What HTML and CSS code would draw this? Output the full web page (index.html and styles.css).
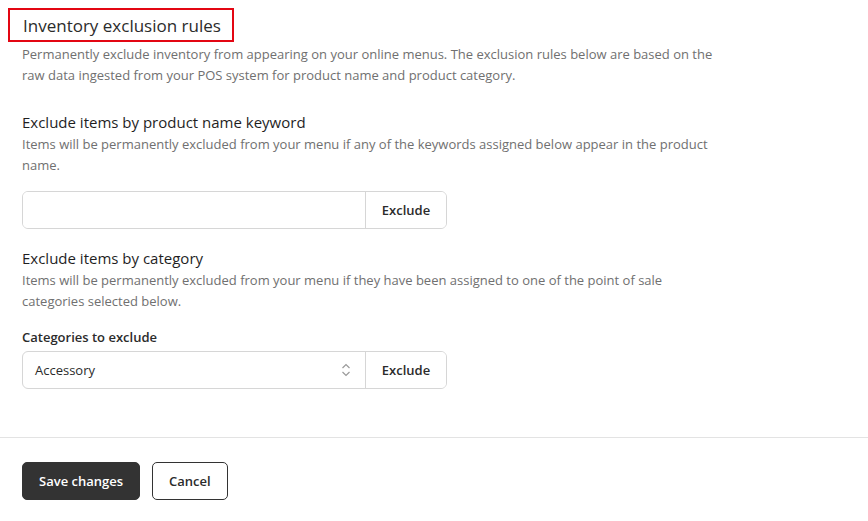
FILE: index.html
```html
<!DOCTYPE html>
<html lang="en">
<head>
  <title>Inventory exclusion rules</title>
  <meta name="viewport" content="width=device-width, initial-scale=1.0">
  <link rel="stylesheet" href="styles.css">
</head>
<body>
  <div class="page">
    <div class="content">
      <h1 class="title">Inventory exclusion rules</h1>
      <p class="desc">Permanently exclude inventory from appearing on your online menus. The exclusion rules below are based on the raw data ingested from your POS system for product name and product category.</p>

      <div class="section">
        <h2>Exclude items by product name keyword</h2>
        <p class="desc">Items will be permanently excluded from your menu if any of the keywords assigned below appear in the product name.</p>
        <div class="field">
          <input type="text" class="field-input">
          <button class="field-btn">Exclude</button>
        </div>
      </div>

      <div class="section">
        <h2>Exclude items by category</h2>
        <p class="desc">Items will be permanently excluded from your menu if they have been assigned to one of the point of sale categories selected below.</p>
        <label class="label">Categories to exclude</label>
        <div class="field">
          <div class="field-input select">
            <span>Accessory</span>
            <svg width="10" height="16" viewBox="0 0 10 16"><path d="M1.5 6 5 2.5 8.5 6M1.5 10 5 13.5 8.5 10" fill="none" stroke="#9a9a9a" stroke-width="1.2"/></svg>
          </div>
          <button class="field-btn">Exclude</button>
        </div>
      </div>
    </div>

    <div class="footer">
      <button class="btn btn-dark">Save changes</button>
      <button class="btn btn-light">Cancel</button>
    </div>
  </div>
</body>
</html>
```
FILE: styles.css
```css
body {
  margin: 0;
  font-family: "Open Sans", "Noto Sans", sans-serif;
  color: #2b2b2b;
  background: #fff;
}

.content {
  padding: 8px 0 0 22px;
  width: 700px;
}

.title {
  display: inline-block;
  margin: 0 0 0 -14px;
  padding: 3px 11px 2px 13px;
  border: 2px solid #e30613;
  font-size: 17px;
  font-weight: 400;
  line-height: 25px;
  color: #2b2b2b;
}

.desc {
  margin: 2px 0 0 0;
  font-size: 13px;
  line-height: 21px;
  color: #707070;
}

.section {
  margin-top: 24px;
}

.section + .section {
  margin-top: 17px;
}

h2 {
  margin: 0;
  font-size: 15px;
  font-weight: 400;
  line-height: 24px;
  color: #1f1f1f;
}

.section .desc {
  margin-top: 0;
}

.label {
  display: block;
  margin-top: 16px;
  font-size: 13px;
  font-weight: 600;
  line-height: 18px;
  color: #2b2b2b;
}

.field {
  display: flex;
  width: 425px;
  height: 38px;
  margin-top: 15px;
  border: 1px solid #d6d6d6;
  border-radius: 6px;
  box-sizing: border-box;
  overflow: hidden;
}

.label + .field {
  margin-top: 5px;
}

.field-input {
  flex: 1;
  border: none;
  outline: none;
  padding: 0 12px;
  font-family: inherit;
  font-size: 13px;
  color: #2b2b2b;
}

.select {
  display: flex;
  align-items: center;
  justify-content: space-between;
  padding: 0 14px 0 12px;
}

.field-btn {
  width: 81px;
  border: none;
  border-left: 1px solid #d6d6d6;
  background: #fff;
  font-family: inherit;
  font-size: 13px;
  font-weight: 600;
  color: #2b2b2b;
}

.footer {
  margin-top: 48px;
  border-top: 1px solid #e3e3e3;
  padding: 24px 22px;
  display: flex;
  gap: 12px;
}

.btn {
  height: 38px;
  border-radius: 5px;
  font-family: inherit;
  font-size: 13px;
  font-weight: 600;
  padding: 0 16px;
}

.btn-dark {
  background: #333;
  border: 1px solid #333;
  color: #fff;
}

.btn-light {
  background: #fff;
  border: 1px solid #333;
  color: #2b2b2b;
}
```
